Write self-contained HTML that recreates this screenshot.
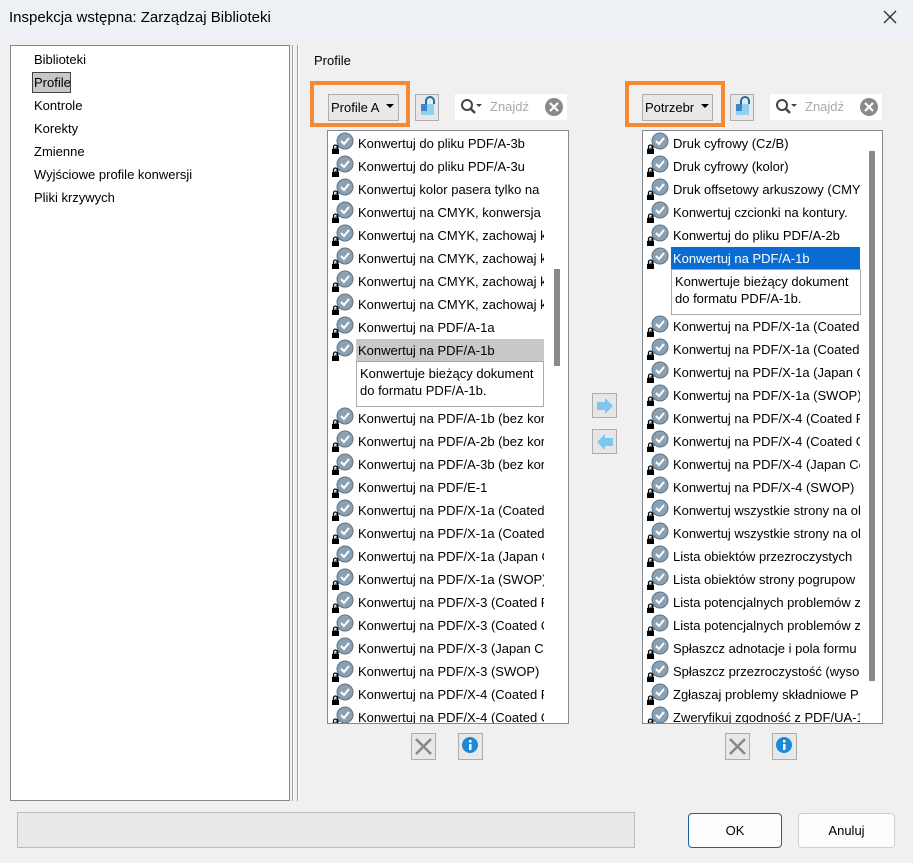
<!DOCTYPE html>
<html><head><meta charset="utf-8"><style>
*{margin:0;padding:0;box-sizing:border-box}
body{width:913px;height:863px;background:#f0f0f0;font-family:"Liberation Sans",sans-serif;font-size:13px;color:#000;position:relative;overflow:hidden}
.a{position:absolute}
.title{left:0;top:0;width:913px;height:37px;background:#eef2f7;}
.list{background:#fff;border:1px solid #828790;overflow:hidden}
.row{position:absolute;height:23px;line-height:23px;white-space:nowrap;overflow:hidden}
.ic{position:absolute;width:22px;height:22px}
.sel{background:#c8c8c8}
.selb{background:#0a6cd2;color:#fff}
.desc{position:absolute;border:1px solid #aaa;background:#fff;padding:3px 3px;line-height:17px;white-space:nowrap;overflow:hidden}
.btn{position:absolute;background:#e8e8e8;border:1px solid #adadad}
.orange{position:absolute;border:4px solid #f58a35}
.search{position:absolute;background:#fff;height:26px}
</style></head><body>
<div class="a title"></div>
<div class="a" style="left:9px;top:9px;font-size:15px;">Inspekcja wstępna: Zarządzaj Biblioteki</div>
<svg class="a" style="left:882px;top:9px" width="16" height="16"><path d="M2 2L14 14M14 2L2 14" stroke="#333" stroke-width="1.4"/></svg>

<div class="a" style="left:10px;top:45px;width:280px;height:756px;background:#fff;border:1px solid #828790"></div>
<div class="a" style="left:34px;top:52px;">Biblioteki</div>
<div class="a" style="left:32px;top:72px;width:39px;height:21px;background:#c8c8c8;border:1px solid #444;"></div>
<div class="a" style="left:34px;top:75px;">Profile</div>
<div class="a" style="left:34px;top:98px;">Kontrole</div>
<div class="a" style="left:34px;top:121px;">Korekty</div>
<div class="a" style="left:34px;top:144px;">Zmienne</div>
<div class="a" style="left:34px;top:167px;">Wyjściowe profile konwersji</div>
<div class="a" style="left:34px;top:190px;">Pliki krzywych</div>
<div class="a" style="left:292px;top:45px;width:2px;height:756px;border-left:1px solid #a0a0a0;border-right:1px solid #fff"></div>
<div class="a" style="left:297px;top:45px;width:2px;height:756px;border-left:1px solid #a0a0a0;border-right:1px solid #fff"></div>
<div class="a" style="left:314px;top:53px;">Profile</div>

<!-- left controls -->
<div class="orange" style="left:310px;top:81px;width:100px;height:46px"></div>
<div class="btn" style="left:328px;top:94px;width:71px;height:27px;"></div>
<div class="a" style="left:331px;top:100px;">Profile A</div>
<svg class="a" style="left:386px;top:104px" width="8" height="5"><path d="M0 0H8L4 4Z" fill="#000"/></svg>
<div class="btn" style="left:415px;top:94px;width:24px;height:27px;"></div>
<svg class="a" style="left:418px;top:96px" width="20" height="22"><path d="M8 9V5a4 4 0 0 1 8 0v3" stroke="#1d6ea7" stroke-width="2" fill="none"/><rect x="3" y="8" width="13" height="11" fill="#8fd0f3"/><rect x="3" y="8" width="6" height="7" fill="#3e87c4"/></svg>
<div class="search" style="left:455px;top:94px;width:112px"></div>
<svg class="a" style="left:460px;top:98px" width="24" height="18"><circle cx="7" cy="7" r="5" stroke="#444" stroke-width="2" fill="none"/><path d="M10.5 10.5L15 15" stroke="#444" stroke-width="2.5"/><path d="M16 6h6l-3 3z" fill="#444"/></svg>
<div class="a" style="left:490px;top:99px;color:#aaa">Znajdź</div>
<svg class="a" style="left:544px;top:97px" width="20" height="20"><circle cx="10" cy="10" r="9" fill="#8a8a8a"/><path d="M6 6L14 14M14 6L6 14" stroke="#fff" stroke-width="2.2"/></svg>

<!-- right controls -->
<div class="orange" style="left:625px;top:81px;width:100px;height:46px"></div>
<div class="btn" style="left:642px;top:94px;width:71px;height:27px;"></div>
<div class="a" style="left:645px;top:100px;">Potrzebr</div>
<svg class="a" style="left:701px;top:104px" width="8" height="5"><path d="M0 0H8L4 4Z" fill="#000"/></svg>
<div class="btn" style="left:730px;top:94px;width:24px;height:27px;"></div>
<svg class="a" style="left:733px;top:96px" width="20" height="22"><path d="M8 9V5a4 4 0 0 1 8 0v3" stroke="#1d6ea7" stroke-width="2" fill="none"/><rect x="3" y="8" width="13" height="11" fill="#8fd0f3"/><rect x="3" y="8" width="6" height="7" fill="#3e87c4"/></svg>
<div class="search" style="left:770px;top:94px;width:112px"></div>
<svg class="a" style="left:775px;top:98px" width="24" height="18"><circle cx="7" cy="7" r="5" stroke="#444" stroke-width="2" fill="none"/><path d="M10.5 10.5L15 15" stroke="#444" stroke-width="2.5"/><path d="M16 6h6l-3 3z" fill="#444"/></svg>
<div class="a" style="left:805px;top:99px;color:#aaa">Znajdź</div>
<svg class="a" style="left:859px;top:97px" width="20" height="20"><circle cx="10" cy="10" r="9" fill="#8a8a8a"/><path d="M6 6L14 14M14 6L6 14" stroke="#fff" stroke-width="2.2"/></svg>

<svg width="0" height="0" style="position:absolute"><defs><g id="pi"><circle cx="13" cy="9" r="8" fill="#8aa1b3" stroke="#5f7384"/><path d="M9 9l3 3 5-6" stroke="#fff" stroke-width="2" fill="none"/><path d="M7 14L3 18" stroke="#5f7384" stroke-width="3"/><rect x="0" y="17" width="7" height="5" fill="#000"/><path d="M1.5 17v-2a2 2 0 0 1 4 0v2" stroke="#000" stroke-width="1.3" fill="none"/></g></defs></svg>

<!-- left list -->
<div class="a list" style="left:327px;top:130px;width:242px;height:594px">
<div id="L"></div>
<div class="a" style="left:226px;top:138px;width:6px;height:97px;background:#8a8a8a"></div>
</div>
<!-- right list -->
<div class="a list" style="left:642px;top:130px;width:241px;height:594px">
<div id="R"></div>
<div class="a" style="left:226px;top:20px;width:6px;height:530px;background:#8a8a8a"></div>
</div>

<script>
function build(id,items,sel,clip,selCls,descTxt){
 var h='',y=1;
 for(var i=0;i<items.length;i++){
  h+='<svg class="ic" style="left:4px;top:'+y+'px" viewBox="0 0 22 22"><use href="#pi"/></svg>';
  h+='<div class="row'+(i==sel?' '+selCls:'')+'" style="left:28px;top:'+y+'px;width:'+clip+'px;padding-left:2px">'+items[i]+'</div>';
  y+=23;
  if(i==sel){h+='<div class="desc" style="left:28px;top:'+(y-1)+'px;width:'+(clip+ (selCls=='selb'?1:0))+'px;height:46px">'+descTxt+'</div>';y+=45;}
 }
 document.getElementById(id).innerHTML=h;
}
var D='Konwertuje bieżący dokument<br>do formatu PDF/A-1b.';
build('L',['Konwertuj do pliku PDF/A-3b','Konwertuj do pliku PDF/A-3u','Konwertuj kolor pasera tylko na','Konwertuj na CMYK, konwersja p','Konwertuj na CMYK, zachowaj k','Konwertuj na CMYK, zachowaj k','Konwertuj na CMYK, zachowaj k','Konwertuj na CMYK, zachowaj k','Konwertuj na PDF/A-1a','Konwertuj na PDF/A-1b','Konwertuj na PDF/A-1b (bez kor','Konwertuj na PDF/A-2b (bez kor','Konwertuj na PDF/A-3b (bez kor','Konwertuj na PDF/E-1','Konwertuj na PDF/X-1a (Coated','Konwertuj na PDF/X-1a (Coated','Konwertuj na PDF/X-1a (Japan C','Konwertuj na PDF/X-1a (SWOP)','Konwertuj na PDF/X-3 (Coated F','Konwertuj na PDF/X-3 (Coated C','Konwertuj na PDF/X-3 (Japan Co','Konwertuj na PDF/X-3 (SWOP)','Konwertuj na PDF/X-4 (Coated F','Konwertuj na PDF/X-4 (Coated C'],9,188,'sel',D);
build('R',['Druk cyfrowy (Cz/B)','Druk cyfrowy (kolor)','Druk offsetowy arkuszowy (CMY','Konwertuj czcionki na kontury.','Konwertuj do pliku PDF/A-2b','Konwertuj na PDF/A-1b','Konwertuj na PDF/X-1a (Coated','Konwertuj na PDF/X-1a (Coated','Konwertuj na PDF/X-1a (Japan C','Konwertuj na PDF/X-1a (SWOP)','Konwertuj na PDF/X-4 (Coated F','Konwertuj na PDF/X-4 (Coated G','Konwertuj na PDF/X-4 (Japan Co','Konwertuj na PDF/X-4 (SWOP)','Konwertuj wszystkie strony na ol','Konwertuj wszystkie strony na ol','Lista obiektów przezroczystych','Lista obiektów strony pogrupow','Lista potencjalnych problemów z','Lista potencjalnych problemów z','Spłaszcz adnotacje i pola formu','Spłaszcz przezroczystość (wysok','Zgłaszaj problemy składniowe P','Zweryfikuj zgodność z PDF/UA-1'],5,189,'selb',D);
</script>

<!-- arrows -->
<div class="btn" style="left:592px;top:393px;width:25px;height:25px;background:#e6e6e6"></div>
<svg class="a" style="left:595px;top:396px" width="20" height="20"><path d="M2 6h8V2l8 8-8 8v-4H2z" fill="#7cc6f0"/></svg>
<div class="btn" style="left:592px;top:429px;width:25px;height:25px;background:#e6e6e6"></div>
<svg class="a" style="left:595px;top:432px" width="20" height="20"><path d="M18 6h-8V2L2 10l8 8v-4h8z" fill="#7cc6f0"/></svg>

<!-- bottom buttons -->
<div class="btn" style="left:411px;top:733px;width:25px;height:27px"></div>
<svg class="a" style="left:414px;top:737px" width="19" height="19"><path d="M2 2L17 17M17 2L2 17" stroke="#888" stroke-width="2.5"/></svg>
<div class="btn" style="left:458px;top:733px;width:25px;height:27px"></div>
<svg class="a" style="left:461px;top:736px" width="19" height="19"><circle cx="9" cy="9" r="8" fill="#1a8ad8"/><rect x="8" y="8" width="2.5" height="6" fill="#fff"/><rect x="8" y="4" width="2.5" height="2.5" fill="#fff"/></svg>
<div class="btn" style="left:725px;top:733px;width:25px;height:27px"></div>
<svg class="a" style="left:728px;top:737px" width="19" height="19"><path d="M2 2L17 17M17 2L2 17" stroke="#888" stroke-width="2.5"/></svg>
<div class="btn" style="left:772px;top:733px;width:25px;height:27px"></div>
<svg class="a" style="left:775px;top:736px" width="19" height="19"><circle cx="9" cy="9" r="8" fill="#1a8ad8"/><rect x="8" y="8" width="2.5" height="6" fill="#fff"/><rect x="8" y="4" width="2.5" height="2.5" fill="#fff"/></svg>

<div class="a" style="left:17px;top:812px;width:618px;height:36px;background:#e9e9e9;border:1px solid #bdbdbd"></div>
<div class="a" style="left:688px;top:813px;width:94px;height:35px;background:#fdfdfd;border:1px solid #1e5fa8;border-radius:4px;text-align:center;line-height:33px">OK</div>
<div class="a" style="left:798px;top:813px;width:97px;height:35px;background:#fdfdfd;border:1px solid #d0d0d0;border-radius:4px;text-align:center;line-height:33px">Anuluj</div>
</body></html>
